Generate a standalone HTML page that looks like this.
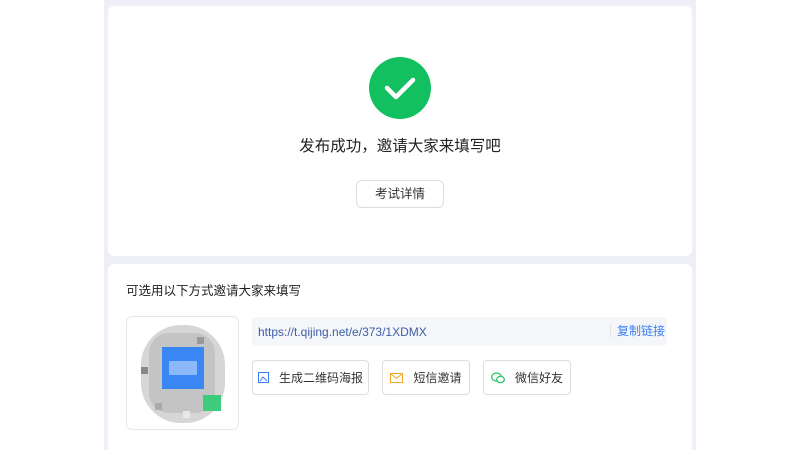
<!DOCTYPE html>
<html><head><meta charset="utf-8"><style>
*{margin:0;padding:0;box-sizing:border-box}
body{width:800px;height:450px;background:#fff;font-family:"Liberation Sans","Noto Sans CJK SC",sans-serif;position:relative;overflow:hidden}
.col{position:absolute;left:104px;top:0;width:592px;height:450px;background:#efeff7}
.card{position:absolute;background:#fff;border-radius:6px}
.btn{position:absolute;border:1px solid #dcdde3;border-radius:4px;background:#fff;font-size:12px;color:#333;display:flex;align-items:center;justify-content:center;gap:10px}
.q{position:absolute;width:7px;height:7px}
</style></head><body>
<div class="col"></div>
<div class="card" style="left:108px;top:6px;width:584px;height:250px">
 <svg style="position:absolute;left:261px;top:51px" width="62" height="62"><circle cx="31" cy="31" r="31" fill="#12c060"/><path d="M18 31 L27 40 L44 23" stroke="#fff" stroke-width="4.5" fill="none" stroke-linecap="round" stroke-linejoin="round"/></svg>
 <div style="position:absolute;left:0;width:584px;top:128px;text-align:center;font-size:15.5px;color:#222">发布成功，邀请大家来填写吧</div>
 <div class="btn" style="left:248px;top:174px;width:88px;height:28px;border-radius:6px;font-size:12.5px;padding-bottom:3px">考试详情</div>
</div>
<div class="card" style="left:108px;top:264px;width:584px;height:190px">
 <div style="position:absolute;left:18px;top:16px;font-size:12.5px;color:#222">可选用以下方式邀请大家来填写</div>
 <div style="position:absolute;left:18px;top:52px;width:113px;height:114px;border:1px solid #e6e7ec;border-radius:6px;overflow:hidden">
  <div style="position:absolute;left:14px;top:8px;width:84px;height:98px;border-radius:40px;background:#d6d6d6"></div>
  <div style="position:absolute;left:22px;top:16px;width:66px;height:80px;background:#c4c4c4;border-radius:20px"></div>
  <div style="position:absolute;left:35px;top:30px;width:42px;height:42px;background:#3a86f5"></div>
  <div style="position:absolute;left:42px;top:44px;width:28px;height:14px;background:#8ab8fb"></div>
  <div style="position:absolute;left:76px;top:78px;width:18px;height:16px;background:#3ecb7c"></div>
  <div class="q" style="left:14px;top:50px;background:#888"></div>
  <div class="q" style="left:70px;top:20px;background:#999"></div>
  <div class="q" style="left:28px;top:86px;background:#aaa"></div>
  <div class="q" style="left:56px;top:94px;background:#e8e8e8"></div>
 </div>
 <div style="position:absolute;left:144px;top:53px;width:415px;height:29px;background:#f5f6f9;border-radius:4px">
  <div style="position:absolute;left:6px;top:8px;font-size:12px;color:#3c5fa8">https://t.qijing.net/e/373/1XDMX</div>
  <div style="position:absolute;left:358px;top:7px;width:1px;height:14px;background:#e4e4ea"></div>
  <div style="position:absolute;left:365px;top:5px;font-size:12px;color:#3a7ef5">复制链接</div>
 </div>
 <div class="btn" style="left:144px;top:96px;width:117px;height:35px"><svg width="11" height="11"><rect x="0.5" y="0.5" width="10" height="10" fill="none" stroke="#3a7ef5"/><path d="M2 9 L5 5 L9 9" stroke="#3a7ef5" fill="none"/></svg>生成二维码海报</div>
 <div class="btn" style="left:274px;top:96px;width:88px;height:35px"><svg width="13" height="10"><rect x="0.5" y="0.5" width="12" height="9" fill="none" stroke="#f5a623"/><path d="M1 1 L6.5 5.5 L12 1" stroke="#f5a623" fill="none"/></svg>短信邀请</div>
 <div class="btn" style="left:375px;top:96px;width:88px;height:35px"><svg width="14" height="12"><ellipse cx="5.5" cy="5" rx="4.8" ry="4" fill="none" stroke="#20c164" stroke-width="1.2"/><ellipse cx="9.5" cy="7.5" rx="3.8" ry="3.2" fill="#fff" stroke="#20c164" stroke-width="1.2"/></svg>微信好友</div>
</div>
</body></html>
